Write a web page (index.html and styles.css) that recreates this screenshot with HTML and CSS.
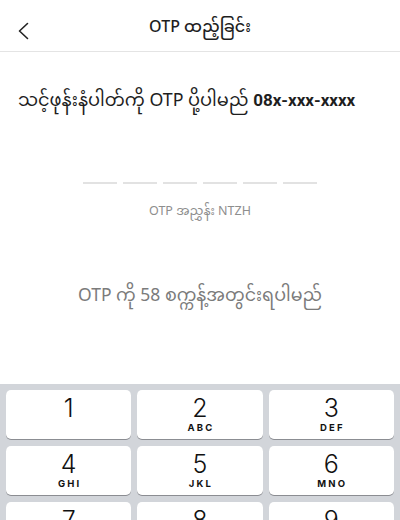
FILE: index.html
```html
<!DOCTYPE html>
<html>
<head>
<meta charset="utf-8">
<link rel="stylesheet" href="styles.css">
</head>
<body>
<div class="screen">
  <header class="header">
    <span class="back"><svg width="12" height="18" viewBox="0 0 12 18"><path d="M10.5 1.5 L2.5 9 L10.5 16.5" fill="none" stroke="#222" stroke-width="1.6" stroke-linecap="round" stroke-linejoin="round"/></svg></span>
    <h1 class="title">OTP ထည့်ခြင်း</h1>
  </header>
  <main class="content">
    <p class="message">သင့်ဖုန်းနံပါတ်ကို OTP ပို့ပါမည် <b>08x-xxx-xxxx</b></p>
    <div class="otp">
      <span class="slot"></span><span class="slot"></span><span class="slot"></span><span class="slot"></span><span class="slot"></span><span class="slot"></span>
    </div>
    <p class="hint">OTP အညွှန်း NTZH</p>
    <p class="countdown">OTP ကို 58 စက္ကန့်အတွင်းရပါမည်</p>
  </main>
  <div class="keyboard">
    <div class="key"><span class="num">1</span></div>
    <div class="key"><span class="num">2</span><span class="letters">ABC</span></div>
    <div class="key"><span class="num">3</span><span class="letters">DEF</span></div>
    <div class="key"><span class="num">4</span><span class="letters">GHI</span></div>
    <div class="key"><span class="num">5</span><span class="letters">JKL</span></div>
    <div class="key"><span class="num">6</span><span class="letters">MNO</span></div>
    <div class="key"><span class="num">7</span><span class="letters">PQRS</span></div>
    <div class="key"><span class="num">8</span><span class="letters">TUV</span></div>
    <div class="key"><span class="num">9</span><span class="letters">WXYZ</span></div>
  </div>
</div>
</body>
</html>
```
FILE: styles.css
```css
html, body {
  margin: 0;
  padding: 0;
  background: #ffffff;
}
body {
  font-family: "Noto Sans", "Noto Sans Myanmar", Roboto, sans-serif;
  color: #1c1c1c;
}
.screen {
  width: 400px;
  height: 520px;
  overflow: hidden;
  display: flex;
  flex-direction: column;
}
.header {
  height: 51px;
  border-bottom: 1px solid #e4e4e4;
  display: flex;
  align-items: center;
  position: relative;
  justify-content: center;
  box-sizing: content-box;
}
.back {
  position: absolute;
  left: 17px;
  top: 22px;
  width: 12px;
  height: 18px;
  display: flex;
}
.title {
  margin: 6px 0 0;
  font-size: 16px;
  font-weight: 500;
  color: #1e1e1e;
}
.content {
  flex: 1;
  display: flex;
  flex-direction: column;
}
.message {
  margin: 34px 0 0 18px;
  font-size: 17.8px;
  line-height: 26px;
  white-space: nowrap;
  color: #1e1e1e;
}
.message b {
  font-family: Roboto, "Noto Sans", sans-serif;
  font-weight: 700;
  font-size: 17px;
}
.otp {
  margin-top: 69px;
  display: flex;
  justify-content: center;
  gap: 6px;
}
.slot {
  width: 34px;
  height: 2px;
  background: #e2e2e2;
}
.hint {
  margin: 19px 0 0;
  text-align: center;
  font-size: 12.5px;
  line-height: 16px;
  color: #8e8e8e;
}
.countdown {
  margin: 62px 0 0;
  text-align: center;
  font-size: 17.5px;
  line-height: 26px;
  color: #7b7b7b;
}
.keyboard {
  height: 136px;
  background: #d2d5da;
  padding: 6px 6px 0;
  box-sizing: border-box;
  display: grid;
  grid-template-columns: repeat(3, 1fr);
  grid-auto-rows: 49px;
  column-gap: 6px;
  row-gap: 7px;
}
.key {
  background: #ffffff;
  border-radius: 5px;
  box-shadow: 0 1px 0 #8b8d92;
  display: flex;
  flex-direction: column;
  align-items: center;
  font-family: Inter, Roboto, sans-serif;
  color: #111;
}
.num {
  font-size: 25px;
  font-weight: 300;
  line-height: 28px;
  margin-top: 4px;
}
.letters {
  font-size: 9.5px;
  font-weight: 700;
  letter-spacing: 2.2px;
  line-height: 11px;
  margin-left: 2px;
}
```
